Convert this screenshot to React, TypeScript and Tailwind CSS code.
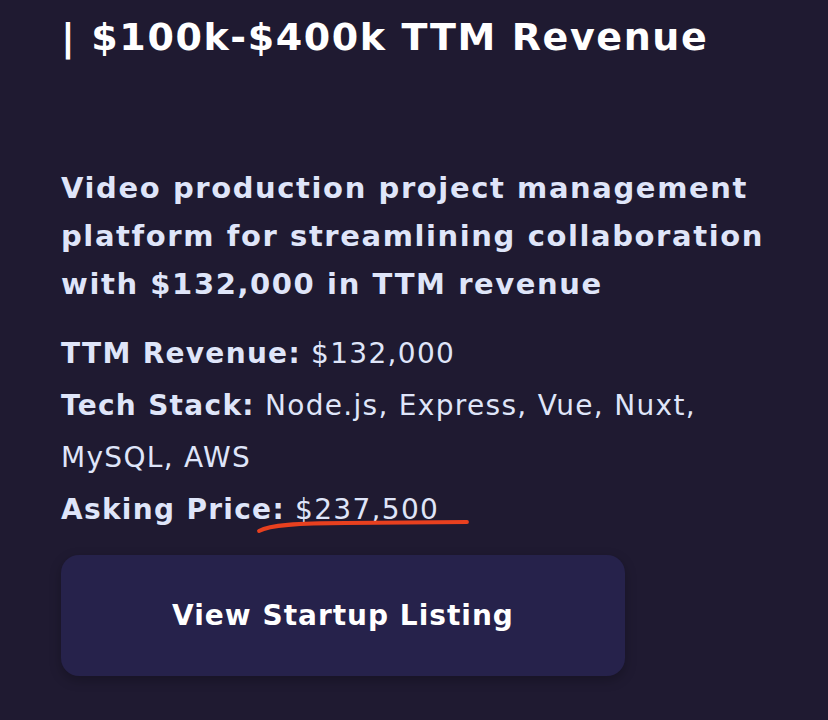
export default function App() {
  return (
    <div className="w-[828px] h-[720px] overflow-hidden bg-[#1f1a31] text-[#dfe5f9]" style={{ fontFamily: '"DejaVu Sans", Verdana, sans-serif' }}>
      <div className="pl-[61px] pr-[40px]">
        <h1 className="mt-[13px] text-[38px] leading-[48px] font-bold text-white tracking-[1.6px]">
          | $100k-$400k TTM Revenue
        </h1>
        <h2 className="mt-[103px] w-[720px] text-[29px] leading-[48px] font-bold tracking-[1.6px]">
          Video production project management platform for streamlining collaboration with $132,000 in TTM revenue
        </h2>
        <div className="mt-[20px] text-[28px] leading-[52px] w-[690px] tracking-[1.3px]">
          <p><span className="font-bold">TTM Revenue:</span> $132,000</p>
          <p><span className="font-bold">Tech Stack:</span> Node.js, Express, Vue, Nuxt, MySQL, AWS</p>
          <p className="relative inline-block">
            <span className="font-bold">Asking Price:</span> $237,500
            <svg className="absolute left-[195px] top-[33px]" width="216" height="18" viewBox="0 0 216 18">
              <path d="M3 14 C 14 8, 40 6, 90 6 L 211 5" stroke="#e8401f" strokeWidth="3.8" fill="none" strokeLinecap="round" />
            </svg>
          </p>
        </div>
        <button className="mt-[19px] w-[564px] h-[121px] rounded-[18px] bg-[#26224b] text-white text-[28px] font-bold tracking-[1px] shadow-[0_4px_12px_rgba(0,0,0,0.25)]">
          View Startup Listing
        </button>
      </div>
    </div>
  );
}
